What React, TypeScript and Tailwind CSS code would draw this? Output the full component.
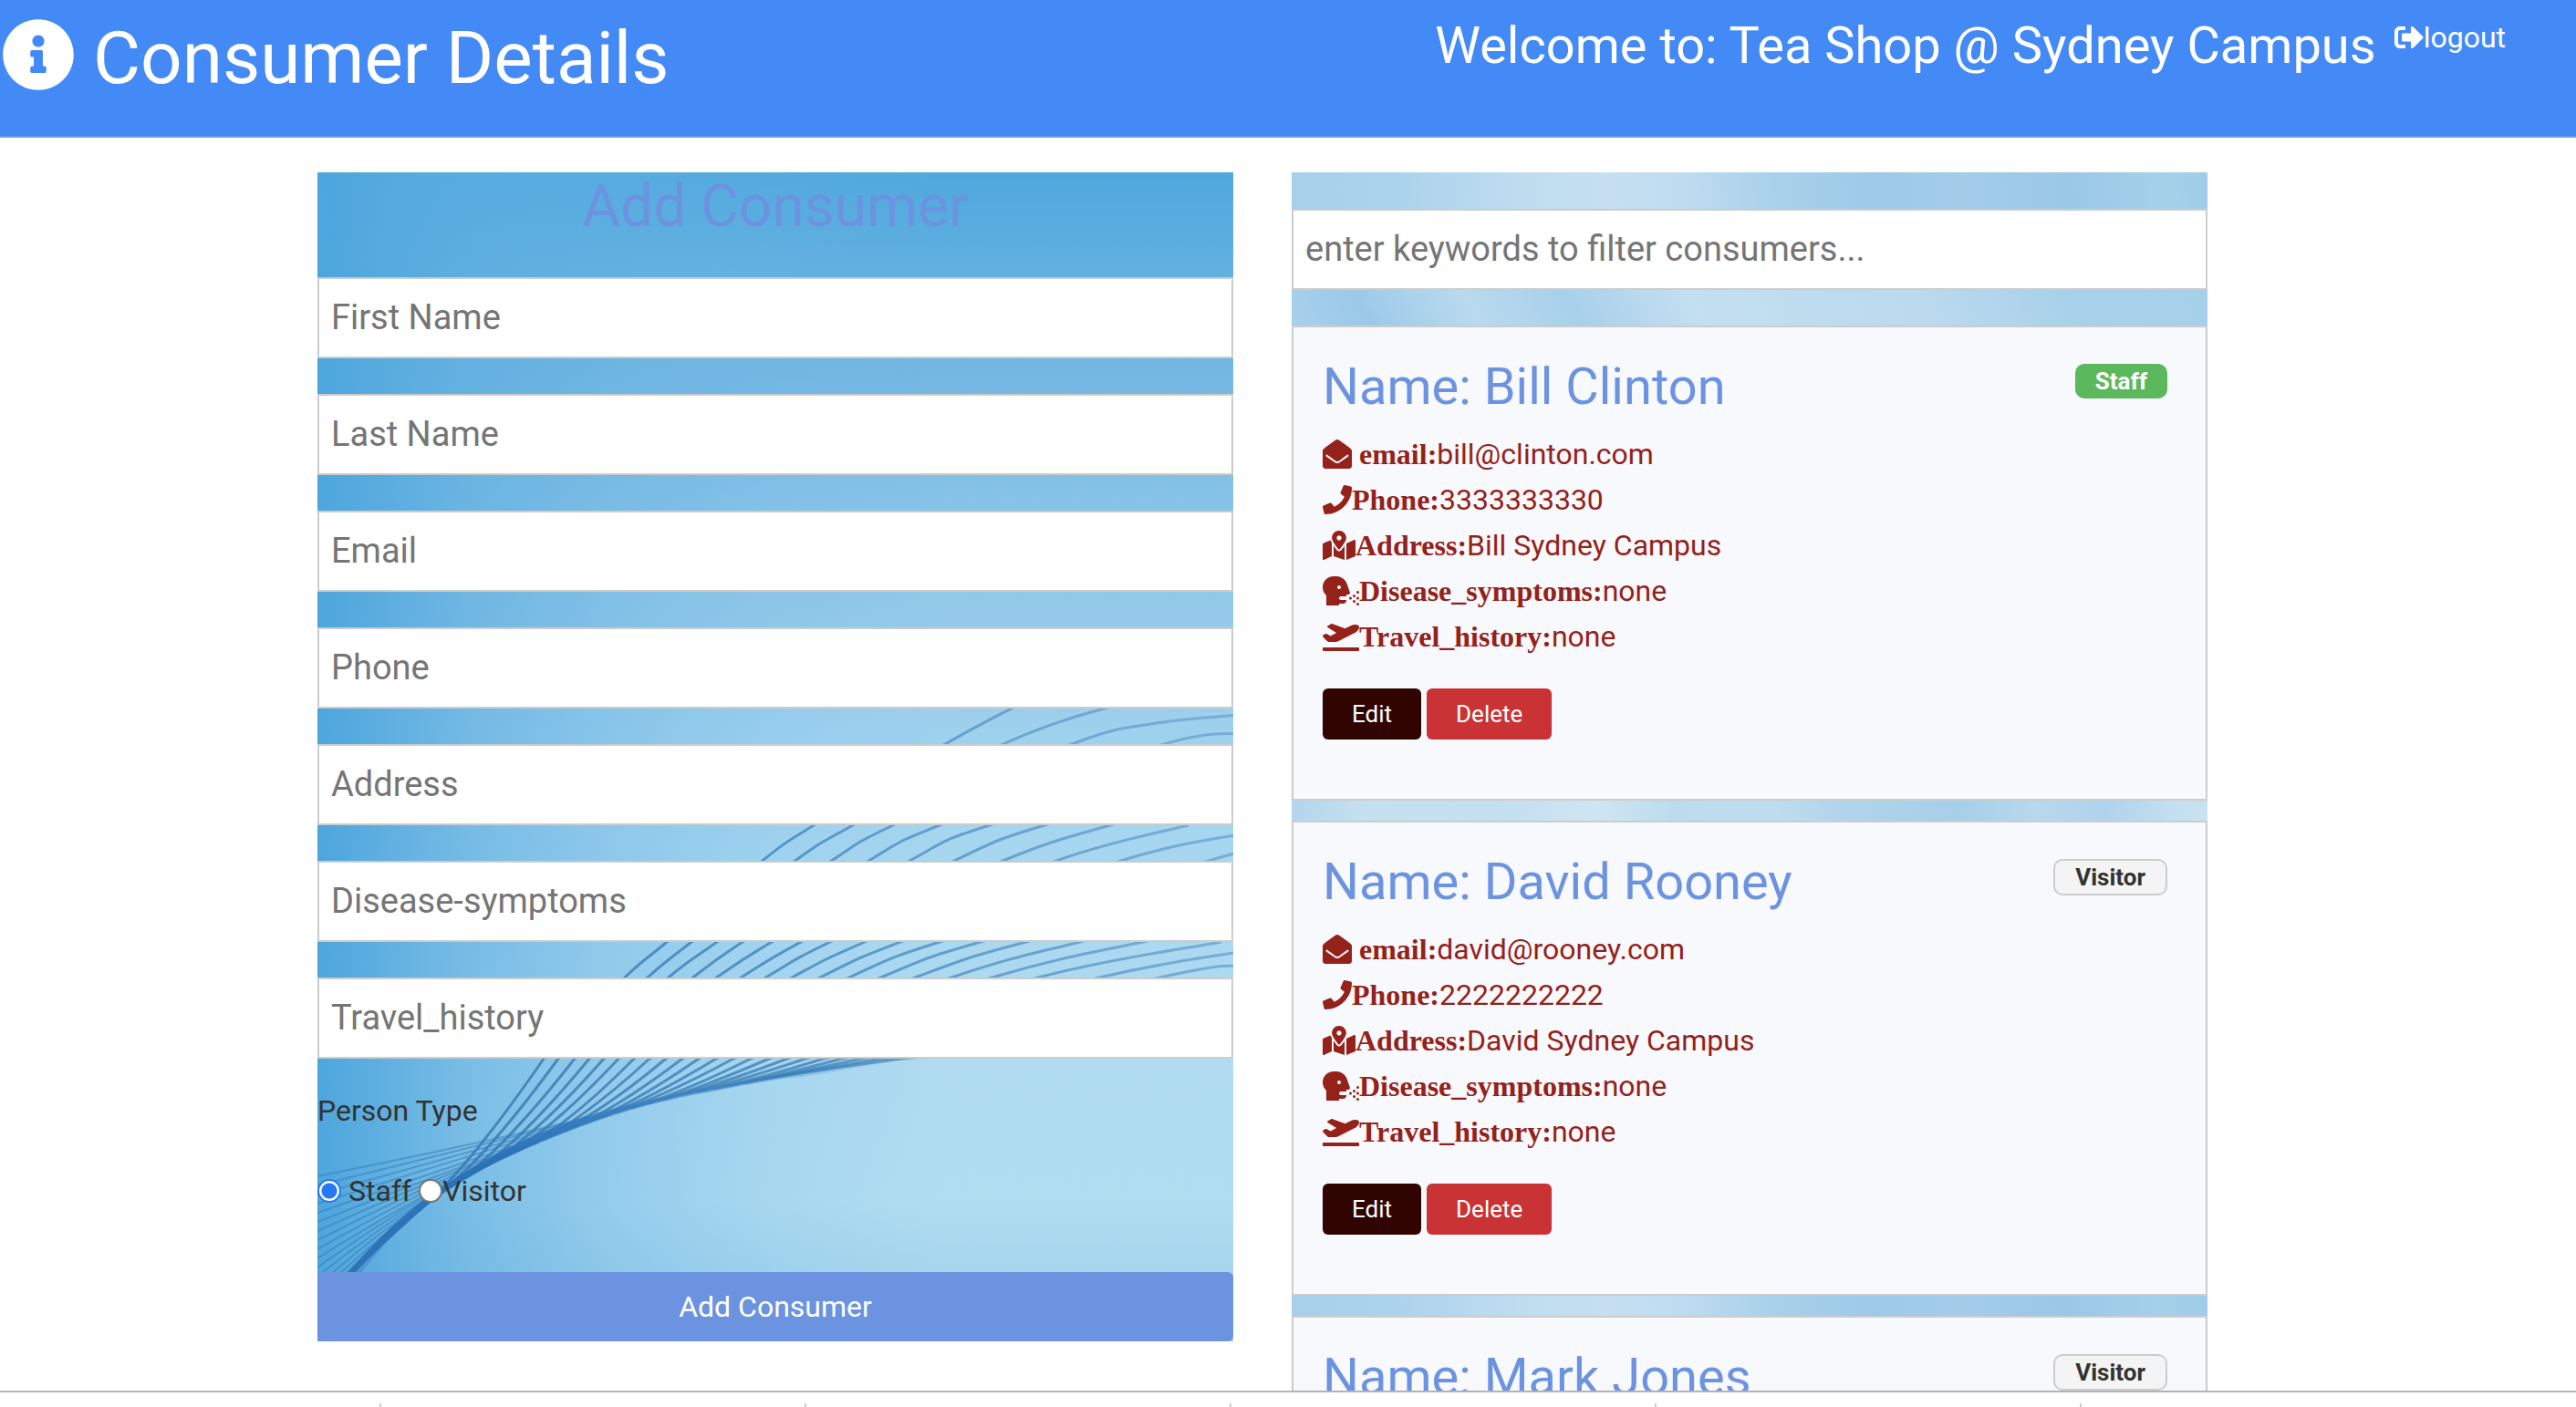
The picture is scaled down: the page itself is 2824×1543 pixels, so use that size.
import React, { useState } from "react";
import {
  FaEnvelopeOpen,
  FaHeadSideCough,
  FaInfoCircle,
  FaMapMarkedAlt,
  FaPhone,
  FaPlaneDeparture,
  FaSignOutAlt,
} from "react-icons/fa";

type PersonType = "Staff" | "Visitor";

interface Details {
  email: string;
  phone: string;
  address: string;
  symptoms: string;
  travel: string;
}

interface Consumer {
  name: string;
  type: PersonType;
  details?: Details;
}

const consumers: Consumer[] = [
  {
    name: "Bill Clinton",
    type: "Staff",
    details: {
      email: "bill@clinton.com",
      phone: "3333333330",
      address: "Bill Sydney Campus",
      symptoms: "none",
      travel: "none",
    },
  },
  {
    name: "David Rooney",
    type: "Visitor",
    details: {
      email: "david@rooney.com",
      phone: "2222222222",
      address: "David Sydney Campus",
      symptoms: "none",
      travel: "none",
    },
  },
  { name: "Mark Jones", type: "Visitor" },
];

const fields = [
  "First Name",
  "Last Name",
  "Email",
  "Phone",
  "Address",
  "Disease-symptoms",
  "Travel_history",
];

type Point = [number, number];

/* Catmull-Rom spline through the given points. */
function spline(points: Point[]): string {
  let d = `M${points[0][0]} ${points[0][1]}`;
  for (let i = 0; i < points.length - 1; i++) {
    const p0 = points[Math.max(i - 1, 0)];
    const p1 = points[i];
    const p2 = points[i + 1];
    const p3 = points[Math.min(i + 2, points.length - 1)];
    d += ` C${p1[0] + (p2[0] - p0[0]) / 6} ${p1[1] + (p2[1] - p0[1]) / 6} ${p2[0] - (p3[0] - p1[0]) / 6} ${p2[1] - (p3[1] - p1[1]) / 6} ${p2[0]} ${p2[1]}`;
  }
  return d;
}

/* Lower edge of the swoosh. */
const edge: Point[] = [
  [-20, 1282],
  [42, 1206],
  [92, 1158],
  [135, 1122],
  [192, 1088],
  [259, 1058],
  [325, 1034],
  [392, 1016],
  [492, 997],
  [544, 990],
  [660, 971],
];

function edgeAt(x: number): number {
  for (let i = 0; i < edge.length - 1; i++) {
    const [ax, ay] = edge[i];
    const [bx, by] = edge[i + 1];
    if (x <= bx) return ay + ((by - ay) * (x - ax)) / (bx - ax);
  }
  return 971;
}

function slopeAt(x: number): number {
  return (edgeAt(x + 25) - edgeAt(x - 25)) / 50;
}

/* Upper parts of the fan of lines, bottom point first. */
const fan: Point[][] = [
  [[248, 972], [338, 882], [383, 844], [489, 754], [544, 716], [690, 626], [784, 576]],
  [[264, 972], [363, 882], [410, 844], [525, 754], [587, 716], [754, 626], [882, 583], [1010, 560]],
  [[282, 972], [386, 882], [438, 844], [565, 754], [631, 716], [830, 626], [920, 604], [1010, 595]],
  [[298, 972], [413, 882], [466, 844], [606, 754], [682, 716], [925, 628], [1010, 615]],
  [[314, 972], [439, 882], [498, 844], [651, 754], [737, 716], [1010, 640]],
  [[330, 972], [466, 882], [530, 844], [700, 754], [797, 716], [1010, 660]],
  [[347, 972], [493, 882], [562, 844], [754, 754], [869, 716], [1010, 680]],
  [[364, 972], [522, 882], [600, 844], [813, 754], [955, 716]],
  [[382, 972], [553, 882], [639, 844], [884, 754], [1010, 726]],
  [[400, 972], [585, 882], [682, 844], [970, 757], [1010, 747]],
  [[418, 972], [620, 882], [727, 844], [1010, 770]],
  [[437, 972], [658, 882], [777, 844], [1010, 790]],
  [[456, 972], [698, 882], [836, 844], [1010, 805]],
  [[475, 972], [743, 882], [905, 844], [1010, 825]],
  [[495, 972], [794, 882], [991, 844]],
  [[515, 972], [853, 884], [1010, 855]],
  [[535, 972], [928, 882], [1010, 870]],
  [[555, 972], [1010, 892]],
  [[575, 972], [1010, 905]],
  [[596, 972], [1010, 918]],
  [[618, 972], [1010, 930]],
  [[640, 972], [1010, 942]],
];

function fanPath(upper: Point[], i: number): string {
  const endX = 110 + i * 18;
  const endY = edgeAt(endX) - 3;
  const [topX, topY] = upper[0];
  const reach = (topX - endX) * 0.4;
  const ctrlY = Math.max(endY + slopeAt(endX) * reach, topY + 4);
  return `M${endX} ${endY} Q${endX + reach} ${ctrlY} ${topX} ${topY} ` + spline(upper);
}

const leftFan: string[] = Array.from({ length: 18 }, (_, j) => {
  const y = 1101 + j * 10;
  const endX = 370 - j * 15;
  const endY = edgeAt(endX) - 3;
  const back = endX * 0.45;
  return `M0 ${y} Q${endX - back} ${endY - slopeAt(endX) * back - 3} ${endX} ${endY}`;
});

const bandPath =
  spline(edge) +
  " L544 986 C440 1000 350 1018 290 1036 C220 1060 165 1092 120 1124 C80 1154 40 1194 -30 1282 Z";

function FormBackdrop() {
  return (
    <svg
      className="absolute inset-0 h-full w-full"
      viewBox="0 0 1004 1282"
      preserveAspectRatio="none"
      aria-hidden="true"
    >
      <defs>
        <linearGradient id="formDown" x1="0" y1="0" x2="0" y2="1">
          <stop offset="0" stopColor="#4fa8de" />
          <stop offset="0.09" stopColor="#63b0e0" />
          <stop offset="0.18" stopColor="#75b8e3" />
          <stop offset="0.28" stopColor="#86c2e7" />
          <stop offset="0.38" stopColor="#94c9e9" />
          <stop offset="0.48" stopColor="#9ed1ee" />
          <stop offset="0.6" stopColor="#a8d7f0" />
          <stop offset="0.76" stopColor="#b0dbf1" />
          <stop offset="0.88" stopColor="#b1ddf1" />
          <stop offset="0.95" stopColor="#a4d4ec" />
          <stop offset="1" stopColor="#9fd0ea" />
        </linearGradient>
        <linearGradient id="formAcross" x1="0" y1="0" x2="1" y2="0">
          <stop offset="0" stopColor="#4ca6dd" />
          <stop offset="0.07" stopColor="#54a9de" stopOpacity="0.88" />
          <stop offset="0.17" stopColor="#5cade0" stopOpacity="0.64" />
          <stop offset="0.32" stopColor="#62b0e2" stopOpacity="0.36" />
          <stop offset="0.5" stopColor="#68b4e4" stopOpacity="0.13" />
          <stop offset="0.68" stopColor="#68b4e4" stopOpacity="0" />
        </linearGradient>
        <linearGradient id="band" x1="0" y1="1" x2="1" y2="0">
          <stop offset="0" stopColor="#2a70b6" stopOpacity="0.95" />
          <stop offset="0.5" stopColor="#2a70b6" stopOpacity="0.9" />
          <stop offset="0.75" stopColor="#3f86c4" stopOpacity="0.6" />
          <stop offset="1" stopColor="#5a9dd0" stopOpacity="0" />
        </linearGradient>
        <linearGradient
          id="line"
          gradientUnits="userSpaceOnUse"
          x1="100"
          y1="1100"
          x2="1004"
          y2="800"
        >
          <stop offset="0" stopColor="#2c6ca8" />
          <stop offset="0.5" stopColor="#3a80b8" />
          <stop offset="1" stopColor="#6aa0cc" />
        </linearGradient>
      </defs>
      <rect width="1004" height="1282" fill="url(#formDown)" />
      <rect width="1004" height="1282" fill="url(#formAcross)" />
      <g fill="none" stroke="url(#line)" strokeWidth="3" strokeOpacity="0.75">
        {fan.map((upper, i) => (
          <path key={i} d={fanPath(upper, i)} />
        ))}
      </g>
      <g fill="none" stroke="#3a82bd" strokeWidth="2" strokeOpacity="0.6">
        {leftFan.map((d) => (
          <path key={d} d={d} />
        ))}
      </g>
      <path d={bandPath} fill="url(#band)" />
    </svg>
  );
}

function ListBackdrop() {
  return (
    <svg
      className="absolute inset-0 h-full w-full"
      viewBox="0 0 1004 1360"
      preserveAspectRatio="xMidYMin slice"
      aria-hidden="true"
    >
      <defs>
        <linearGradient id="sky1" gradientUnits="userSpaceOnUse" x1="0" y1="0" x2="1004" y2="-60">
          <stop offset="0" stopColor="#a6cfe9" />
          <stop offset="0.13" stopColor="#acd3ec" />
          <stop offset="0.27" stopColor="#c0ddf0" />
          <stop offset="0.35" stopColor="#c6dff2" />
          <stop offset="0.43" stopColor="#bedcf0" />
          <stop offset="0.53" stopColor="#a8d0ea" />
          <stop offset="0.63" stopColor="#9dcae8" />
          <stop offset="0.72" stopColor="#a3cce9" />
          <stop offset="0.83" stopColor="#9ac8e7" />
          <stop offset="0.93" stopColor="#a6d0ea" />
          <stop offset="1" stopColor="#9dcaea" />
        </linearGradient>
        <linearGradient id="sky2" gradientUnits="userSpaceOnUse" x1="0" y1="148" x2="820" y2="-300">
          <stop offset="0" stopColor="#aad2eb" />
          <stop offset="0.09" stopColor="#9cc9e9" />
          <stop offset="0.2" stopColor="#b9daee" />
          <stop offset="0.3" stopColor="#a8d0eb" />
          <stop offset="0.42" stopColor="#c4dff1" />
          <stop offset="0.65" stopColor="#badaee" />
          <stop offset="0.8" stopColor="#a7d0ea" />
          <stop offset="1" stopColor="#a6cfe9" />
        </linearGradient>
        <linearGradient id="sky3" gradientUnits="userSpaceOnUse" x1="0" y1="0" x2="1004" y2="0">
          <stop offset="0" stopColor="#add3ec" />
          <stop offset="0.1" stopColor="#c6e0f0" />
          <stop offset="0.26" stopColor="#c6dff1" />
          <stop offset="0.34" stopColor="#d0e5f2" />
          <stop offset="0.42" stopColor="#bcdcee" />
          <stop offset="0.52" stopColor="#c0ddf0" />
          <stop offset="0.6" stopColor="#b0d4eb" />
          <stop offset="0.72" stopColor="#a6cfe9" />
          <stop offset="0.8" stopColor="#b7d9ed" />
          <stop offset="0.87" stopColor="#afd3ec" />
          <stop offset="0.95" stopColor="#c6e0f1" />
          <stop offset="1" stopColor="#cce4f1" />
        </linearGradient>
      </defs>
      <rect width="1004" height="84" fill="url(#sky1)" />
      <rect y="84" width="1004" height="316" fill="url(#sky2)" />
      <rect y="400" width="1004" height="500" fill="url(#sky3)" />
      <g transform="translate(0 1232)">
        <rect y="-332" width="1004" height="860" fill="url(#sky1)" />
      </g>
    </svg>
  );
}

const inputClass =
  "block h-[89px] w-full border-2 border-[#ccc] bg-white px-[13px] pb-0.5 text-[38px] text-[#333] placeholder:text-[#757575] outline-none";

const radioClass =
  "size-[26px] shrink-0 appearance-none rounded-full border-2 border-[#767676] bg-white checked:border-[#2678f6] checked:bg-[radial-gradient(circle,#2678f6_8px,#fff_9px)]";

function ConsumerForm() {
  const [type, setType] = useState<PersonType>("Staff");
  return (
    <section className="relative">
      <FormBackdrop />
      <form className="relative flex flex-col" onSubmit={(e) => e.preventDefault()}>
        <h2 className="mb-[39px] text-center text-[64px] leading-[76px] text-[#6c93e0]">
          Add Consumer
        </h2>
        <div className="flex flex-col gap-[39px]">
          {fields.map((label) => (
            <input
              key={label}
              type="text"
              aria-label={label}
              placeholder={label}
              className={inputClass}
            />
          ))}
        </div>
        <fieldset className="mt-8 flex flex-col gap-[38px] text-[32px] leading-[50px]">
          <legend className="contents">
            <span>Person Type</span>
          </legend>
          <div className="flex items-center gap-2">
            <label className="flex items-center gap-2">
              <input
                type="radio"
                name="type"
                className={radioClass}
                checked={type === "Staff"}
                onChange={() => setType("Staff")}
              />
              Staff
            </label>
            <label className="flex items-center">
              <input
                type="radio"
                name="type"
                className={radioClass}
                checked={type === "Visitor"}
                onChange={() => setType("Visitor")}
              />
              Visitor
            </label>
          </div>
        </fieldset>
        <button
          type="submit"
          className="mt-16 h-[76px] w-full rounded-md bg-[#6b93e0] text-[32px] text-white"
        >
          Add Consumer
        </button>
      </form>
    </section>
  );
}

function DetailRow({
  icon,
  label,
  value,
}: {
  icon: React.ReactNode;
  label: string;
  value: string;
}) {
  return (
    <li className="flex items-baseline">
      <span className="self-center">{icon}</span>
      <strong className="font-['Liberation_Serif',serif] font-bold">{label}</strong>
      <span>{value}</span>
    </li>
  );
}

function DetailList({ details }: { details: Details }) {
  return (
    <ul className="mt-4 text-[32px] leading-[50px] text-[#94221b]">
      <DetailRow
        icon={<FaEnvelopeOpen className="mr-2 h-8 w-8" />}
        label="email:"
        value={details.email}
      />
      <DetailRow icon={<FaPhone className="h-8 w-8" />} label="Phone:" value={details.phone} />
      <DetailRow
        icon={<FaMapMarkedAlt className="h-8 w-9" />}
        label="Address:"
        value={details.address}
      />
      <DetailRow
        icon={<FaHeadSideCough className="h-8 w-10" />}
        label="Disease_symptoms:"
        value={details.symptoms}
      />
      <DetailRow
        icon={<FaPlaneDeparture className="h-8 w-10" />}
        label="Travel_history:"
        value={details.travel}
      />
    </ul>
  );
}

function ConsumerCard({ consumer }: { consumer: Consumer }) {
  return (
    <article className="border-2 border-[#ccc] bg-[#f8f9fc] px-8 pt-8 pb-[65px]">
      <div className="flex items-start justify-between">
        <h3 className="text-[56px] leading-[66px] text-[#6c93e0]">Name: {consumer.name}</h3>
        <span
          className={
            consumer.type === "Staff"
              ? "mt-2 mr-[10px] flex h-[38px] items-center rounded-[10px] bg-[#5cb85c] px-[22px] text-[26px] leading-none font-bold text-white"
              : "mt-2 mr-[10px] flex h-10 items-center rounded-[10px] border-2 border-[#ccc] bg-[#f4f4f4] px-[22px] text-[26px] leading-none font-bold text-[#333]"
          }
        >
          {consumer.type}
        </span>
      </div>
      {consumer.details && (
        <>
          <DetailList details={consumer.details} />
          <div className="mt-8 flex gap-1.5 text-[26px] text-white">
            <button type="button" className="h-14 rounded-md bg-[#300400] px-8">
              Edit
            </button>
            <button type="button" className="h-14 rounded-md bg-[#c93336] px-8">
              Delete
            </button>
          </div>
        </>
      )}
    </article>
  );
}

function ConsumerList() {
  const [query, setQuery] = useState("");
  const shown = consumers.filter((c) => c.name.toLowerCase().includes(query.toLowerCase()));
  return (
    <section className="relative">
      <ListBackdrop />
      <div className="relative pt-10">
        <input
          type="text"
          aria-label="Filter consumers"
          placeholder="enter keywords to filter consumers..."
          className={inputClass}
          value={query}
          onChange={(e) => setQuery(e.target.value)}
        />
        <div className="mt-[39px] flex flex-col gap-[22px]">
          {shown.map((c) => (
            <ConsumerCard key={c.name} consumer={c} />
          ))}
        </div>
      </div>
    </section>
  );
}

export default function App() {
  return (
    <div className="flex h-screen flex-col bg-white font-[Roboto,sans-serif] text-[#333]">
      <header className="flex h-[151px] shrink-0 items-start justify-between border-b-2 border-[#7499e2] bg-[#448af7] pr-[77px] text-white">
        <h1 className="flex items-start gap-5 pl-0.5 text-[80px] leading-[128px]">
          <FaInfoCircle className="mt-5 size-20" />
          Consumer Details
        </h1>
        <div className="flex items-start pt-4">
          <span className="mr-5 text-[56px] leading-[68px]">
            Welcome to: Tea Shop @ Sydney Campus
          </span>
          <a href="#logout" className="flex items-center text-[32px] leading-[50px]">
            <FaSignOutAlt className="size-8" />
            logout
          </a>
        </div>
      </header>
      <main className="min-h-0 flex-1 overflow-y-auto pt-[38px] pr-28 pl-14 [scrollbar-width:none]">
        <div className="mx-auto grid w-full max-w-[2072px] grid-cols-2 items-start gap-16">
          <ConsumerForm />
          <ConsumerList />
        </div>
      </main>
      <footer className="flex h-[18px] shrink-0 items-end overflow-hidden border-t-2 border-[#b3b3b3] bg-white">
        <div className="h-1 w-[418px] shrink-0 border-r-2 border-[#ccc]" />
        <div className="h-1 w-[466px] shrink-0 border-r-2 border-[#ccc]" />
        <div className="h-1 w-[466px] shrink-0 border-r-2 border-[#ccc]" />
        <div className="h-1 w-[466px] shrink-0 border-r-2 border-[#ccc]" />
        <div className="h-1 w-[466px] shrink-0 border-r-2 border-[#ccc]" />
      </footer>
    </div>
  );
}
